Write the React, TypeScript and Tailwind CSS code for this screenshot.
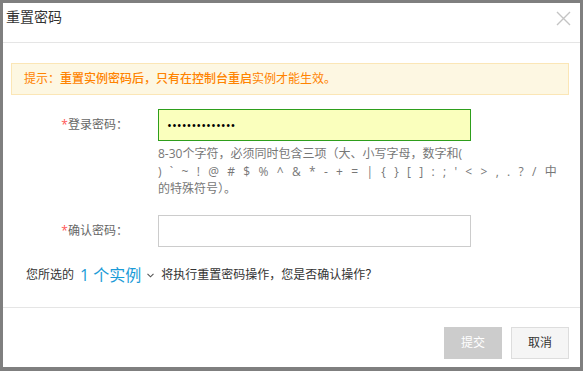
import React from 'react';

const font = { fontFamily: '"Open Sans", "Noto Sans CJK SC", sans-serif' };

function CloseIcon() {
  return (
    <svg width="15" height="15" viewBox="0 0 15 15" className="mt-[5px]">
      <path d="M1 1L14 14M14 1L1 14" stroke="#c4c4c4" strokeWidth="1.4" />
    </svg>
  );
}

function Label({ text }: { text: string }) {
  return (
    <div className="w-[147px] pr-[30px] h-[32px] flex items-center justify-end text-[12px] text-[#666]">
      <span className="text-[#ff5555]">*</span>
      {text}：
    </div>
  );
}

const symbols = ") ` ~ ! @ # $ % ^ & * - + = | { } [ ] : ; ' < > , . ? / 中";

export default function App() {
  return (
    <div className="min-h-screen bg-[#7f7f7f] pt-[3px] px-[3px] pb-[4px]" style={font}>
      <div className="bg-white h-[364px] flex flex-col">
        <div className="h-[40px] border-b border-[#e5e5e5] flex items-start justify-between pl-[3px] pr-[9px] pt-[3px]">
          <h1 className="text-[14px] leading-[21px] text-[#333]">重置密码</h1>
          <CloseIcon />
        </div>

        <div className="flex-1 pt-[20px] pl-[8px] pr-[11px]">
          <div className="h-[32px] flex items-center pl-[12px] bg-[#fdf7e2] border border-[#fbe6b6] text-[12px] text-[#ff8300]">
            提示：<span className="font-medium">重置实例密码后，只有在控制台重启</span>实例才能生效。
          </div>

          <div className="flex mt-[14px]">
            <Label text="登录密码" />
            <div className="w-[313px]">
              <input
                type="password"
                readOnly
                defaultValue="abcdefghijklmn"
                className="w-full h-[32px] px-[8px] bg-[#faffbd] border border-[#2e9e1c] text-[13px] text-black outline-none"
              />
              <div className="mt-[4px] text-[12px] leading-[17.5px] text-[#777]">
                <div className="whitespace-nowrap">8-30个字符，必须同时包含三项（大、小写字母，数字和(</div>
                <div className="whitespace-nowrap tracking-[1px] [word-spacing:3.2px]">{symbols}</div>
                <div className="whitespace-nowrap">的特殊符号）。</div>
              </div>
            </div>
          </div>

          <div className="flex mt-[17px]">
            <Label text="确认密码" />
            <input
              type="password"
              readOnly
              className="w-[313px] h-[32px] px-[8px] bg-white border border-[#cccccc] outline-none"
            />
          </div>

          <div className="mt-[16px] ml-[15px] h-[24px] flex items-center text-[12px] text-[#333]">
            <span>您所选的</span>
            <span className="ml-[6px] text-[16px] text-[#1a9bd7]">1 个实例</span>
            <svg width="7" height="5" viewBox="0 0 7 5" className="ml-[6px] mt-[2px]">
              <path d="M0.5 0.8L3.5 3.8L6.5 0.8" fill="none" stroke="#555" strokeWidth="1.1" />
            </svg>
            <span className="ml-[7px]">将执行重置密码操作，您是否确认操作？</span>
          </div>
        </div>

        <div className="h-[60px] border-t border-[#e5e5e5] flex justify-end items-start pt-[19px] pr-[11px] gap-[9px]">
          <button className="w-[58px] h-[32px] bg-[#cccccc] text-white text-[12px]">提交</button>
          <button className="w-[58px] h-[32px] bg-[#f5f5f5] border border-[#dddddd] text-[#333] text-[12px]">
            取消
          </button>
        </div>
      </div>
    </div>
  );
}
